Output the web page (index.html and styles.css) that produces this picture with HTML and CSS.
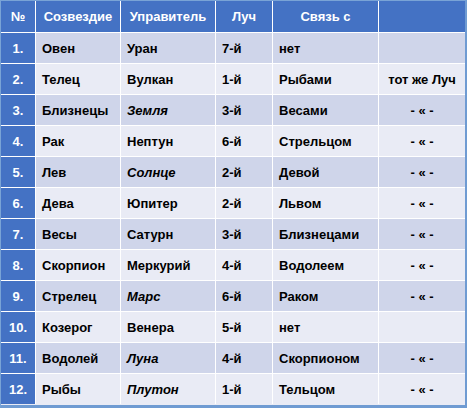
FILE: index.html
```
<!DOCTYPE html>
<html lang="ru">
<head>
<meta charset="utf-8">
<title>Созвездия</title>
<link rel="stylesheet" href="styles.css">
</head>
<body>
<div class="frame">
<table class="zodiac">
<colgroup>
<col class="c1"><col class="c2"><col class="c3"><col class="c4"><col class="c5"><col class="c6">
</colgroup>
<thead>
<tr><th>№</th><th>Созвездие</th><th>Управитель</th><th>Луч</th><th>Связь с</th><th></th></tr>
</thead>
<tbody>
<tr><td class="num">1.</td><td>Овен</td><td>Уран</td><td>7-й</td><td>нет</td><td class="note"></td></tr>
<tr><td class="num">2.</td><td>Телец</td><td>Вулкан</td><td>1-й</td><td>Рыбами</td><td class="note">тот же Луч</td></tr>
<tr><td class="num">3.</td><td>Близнецы</td><td><i>Земля</i></td><td>3-й</td><td>Весами</td><td class="note">- « -</td></tr>
<tr><td class="num">4.</td><td>Рак</td><td>Нептун</td><td>6-й</td><td>Стрельцом</td><td class="note">- « -</td></tr>
<tr><td class="num">5.</td><td>Лев</td><td><i>Солнце</i></td><td>2-й</td><td>Девой</td><td class="note">- « -</td></tr>
<tr><td class="num">6.</td><td>Дева</td><td>Юпитер</td><td>2-й</td><td>Львом</td><td class="note">- « -</td></tr>
<tr><td class="num">7.</td><td>Весы</td><td>Сатурн</td><td>3-й</td><td>Близнецами</td><td class="note">- « -</td></tr>
<tr><td class="num">8.</td><td>Скорпион</td><td>Меркурий</td><td>4-й</td><td>Водолеем</td><td class="note">- « -</td></tr>
<tr><td class="num">9.</td><td>Стрелец</td><td><i>Марс</i></td><td>6-й</td><td>Раком</td><td class="note">- « -</td></tr>
<tr><td class="num">10.</td><td>Козерог</td><td>Венера</td><td>5-й</td><td>нет</td><td class="note"></td></tr>
<tr><td class="num">11.</td><td>Водолей</td><td><i>Луна</i></td><td>4-й</td><td>Скорпионом</td><td class="note">- « -</td></tr>
<tr><td class="num">12.</td><td>Рыбы</td><td><i>Плутон</i></td><td>1-й</td><td>Тельцом</td><td class="note">- « -</td></tr>
</tbody>
</table>
</div>
</body>
</html>
```
FILE: styles.css
```
html, body {
  margin: 0;
  padding: 0;
  background: #ffffff;
}
.frame {
  width: 467px;
  height: 408px;
  box-sizing: border-box;
  border-top: 1px solid #79a3d6;
  border-left: 1px solid #79a3d6;
  border-right: 2px solid #6f9bd2;
  border-bottom: 3px solid #6f9bd2;
  background: #e9ebf5;
  overflow: hidden;
}
.zodiac {
  border-collapse: separate;
  border-spacing: 0;
  table-layout: fixed;
  width: 464px;
  font-family: "Liberation Sans", Arial, sans-serif;
  font-size: 13px;
  font-weight: bold;
  color: #000;
}
.c1 { width: 35px; }
.c2 { width: 85px; }
.c3 { width: 95px; }
.c4 { width: 57px; }
.c5 { width: 106px; }
.c6 { width: 86px; }
.zodiac th,
.zodiac td {
  border-right: 1px solid #ffffff;
  border-bottom: 1px solid #ffffff;
  padding: 0 0 0 6px;
  white-space: nowrap;
  overflow: hidden;
  text-align: left;
}
.zodiac th:last-child,
.zodiac td:last-child {
  border-right: none;
}
.zodiac th {
  height: 31px;
  background: #4472c4;
  color: #ffffff;
  text-align: center;
  padding: 0;
}
.zodiac td {
  height: 30px;
}
.zodiac tbody tr:nth-child(odd) td {
  background: #cfd5ea;
}
.zodiac tbody tr:nth-child(even) td {
  background: #e9ebf5;
}
.zodiac tbody tr td.num {
  background: #4472c4;
  color: #ffffff;
  text-align: center;
  padding: 0;
}
.zodiac td.note {
  text-align: center;
  padding: 0;
}
.zodiac i {
  font-style: italic;
}
.zodiac tbody tr:last-child td {
  border-bottom: none;
}
```
